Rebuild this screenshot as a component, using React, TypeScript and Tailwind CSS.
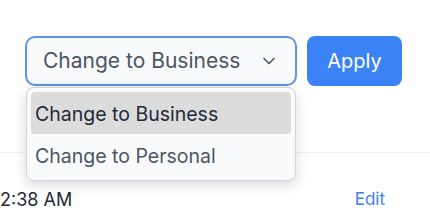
import { ChevronDown } from "lucide-react";

const App = () => {
  return (
    <div className="relative h-[218px] w-[430px] overflow-hidden bg-white font-['Inter',sans-serif]">
      <div className="flex justify-end gap-[10px] pr-7 pt-9">
        <div className="relative">
          <button className="flex h-[50px] w-[272px] items-center justify-between rounded-[10px] border-2 border-[#5b93ee] bg-[#f9fafb] pl-4 pr-4 text-[21px] text-[#4b5563]">
            <span>Change to Business</span>
            <ChevronDown className="h-5 w-5 text-[#4b5563]" strokeWidth={2} />
          </button>

          {/* open menu */}
          <div className="absolute left-px top-[51px] z-10 w-[270px] rounded-lg border border-[#d1d5db] bg-[#f9fafb] p-1 shadow-[0_4px_14px_rgba(0,0,0,0.15)]">
            <div className="flex h-[42px] items-center rounded bg-[#dcdcdc] px-1 pt-[3px] text-[19.5px] text-[#1f2937]">
              Change to Business
            </div>
            <div className="flex h-[42px] items-center px-1 pt-[3px] text-[19.5px] text-[#4b5563]">
              Change to Personal
            </div>
          </div>
        </div>

        <button className="h-[50px] w-[95px] rounded-lg bg-[#3b82f6] text-[20px] text-white">
          Apply
        </button>
      </div>

      <div className="mt-[66px] border-t border-[#f0f0f0]">
        <div className="flex items-center justify-between pr-[45px] pt-[33px] text-[18px]">
          <div className="text-[#1f2937]">2:38 AM</div>
          <div className="text-[17px] text-[#3b82f6]">Edit</div>
        </div>
      </div>
    </div>
  );
};

export default App;
